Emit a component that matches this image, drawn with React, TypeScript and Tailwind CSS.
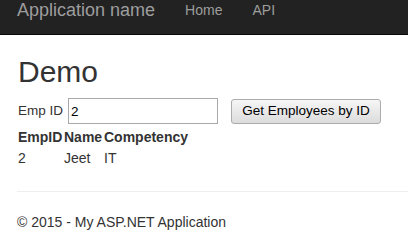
export default function App() {
  const font = { fontFamily: '"Liberation Sans", Arial, sans-serif' };
  return (
    <div className="min-h-[243px] bg-white text-[#333]" style={font}>
      <nav className="h-[35px] bg-[#222] border-b border-[#080808] flex items-start">
        <span className="ml-[17px] text-[18px] leading-[20px] text-[#9d9d9d]">Application name</span>
        <span className="ml-[30px] text-[14px] leading-[20px] text-[#9d9d9d]">Home</span>
        <span className="ml-[30px] text-[14px] leading-[20px] text-[#9d9d9d]">API</span>
      </nav>

      <div className="pl-[17px]">
        <h2 className="mt-[20px] ml-px text-[30px] leading-[33px] font-normal">Demo</h2>

        <div className="mt-[10px] ml-px flex items-center h-[26px] text-[13.5px]">
          <label className="mr-[5px]">Emp ID</label>
          <input
            defaultValue="2"
            className="w-[150px] h-[26px] border border-[#a9a9a9] px-[2px] text-[13.5px] text-black outline-none"
            style={font}
          />
          <button
            className="ml-[13px] w-[150px] h-[25px] rounded-[3px] border border-[#acacac] bg-gradient-to-b from-[#f6f6f6] to-[#dcdcdc] text-[13.5px] text-black"
            style={font}
          >
            Get Employees by ID
          </button>
        </div>

        <div className="mt-[3px] pl-px text-[14px] leading-[20px]">
          <div className="flex font-bold">
            <span className="w-[46px]">EmpID</span>
            <span className="w-[40px]">Name</span>
            <span>Competency</span>
          </div>
          <div className="flex mt-[1px]">
            <span className="w-[46px]">2</span>
            <span className="w-[40px]">Jeet</span>
            <span>IT</span>
          </div>
        </div>

        <hr className="mt-[23px] border-t border-[#eee]" />

        <footer className="mt-[20px] text-[14px] leading-[20px]">© 2015 - My ASP.NET Application</footer>
      </div>
    </div>
  );
}
